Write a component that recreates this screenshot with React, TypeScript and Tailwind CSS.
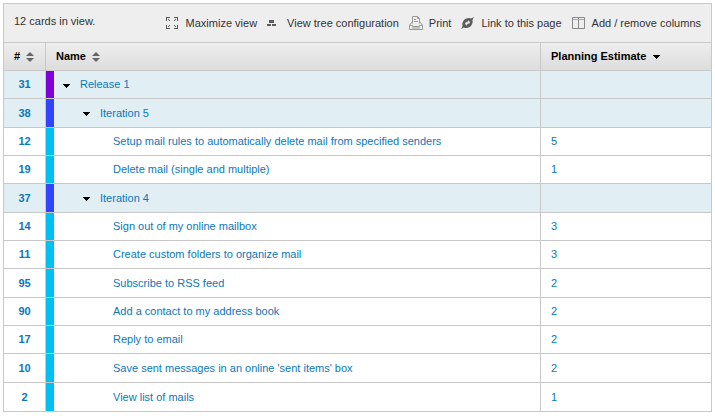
import type { ReactNode } from "react";

type Card = { id: number; name: string; level: 0 | 1 | 2; estimate?: number };

const cards: Card[] = [
  { id: 31, name: "Release 1", level: 0 },
  { id: 38, name: "Iteration 5", level: 1 },
  { id: 12, name: "Setup mail rules to automatically delete mail from specified senders", level: 2, estimate: 5 },
  { id: 19, name: "Delete mail (single and multiple)", level: 2, estimate: 1 },
  { id: 37, name: "Iteration 4", level: 1 },
  { id: 14, name: "Sign out of my online mailbox", level: 2, estimate: 3 },
  { id: 11, name: "Create custom folders to organize mail", level: 2, estimate: 3 },
  { id: 95, name: "Subscribe to RSS feed", level: 2, estimate: 2 },
  { id: 90, name: "Add a contact to my address book", level: 2, estimate: 2 },
  { id: 17, name: "Reply to email", level: 2, estimate: 2 },
  { id: 10, name: "Save sent messages in an online 'sent items' box", level: 2, estimate: 2 },
  { id: 2, name: "View list of mails", level: 2, estimate: 1 },
];

const barColor = ["bg-[#8000d8]", "bg-[#3344ff]", "bg-[#00c0f0]"];
const indent = ["pl-[9px]", "pl-[29px]", "pl-[59px]"];

function MaximizeIcon() {
  return (
    <svg width="12" height="12" viewBox="0 0 12 12" fill="#555" shapeRendering="crispEdges" aria-hidden="true">
      <path d="M0 0h4v1H1v3H0zM2 2h1v1H2zM3 3h1v1H3zM8 0h4v4h-1V1H8zM9 2h1v1H9zM8 3h1v1H8zM0 8h1v3h3v1H0zM2 9h1v1H2zM3 8h1v1H3zM11 8h1v4H8v-1h3zM9 9h1v1H9zM8 8h1v1H8z" />
    </svg>
  );
}

function TreeIcon() {
  return (
    <svg width="9" height="6" viewBox="0 0 9 6" fill="#5c5c5c" aria-hidden="true">
      <path d="M2 0h5v3H2zM0 4h4v2H0zM5 4h4v2H5z" />
    </svg>
  );
}

function PrintIcon() {
  return (
    <svg width="14" height="14" viewBox="0 0 14 14" fill="none" stroke="#999" aria-hidden="true">
      <path d="M3.5 7.5v-7h5l2 2v5M8.5.5v2h2M5 3.5h2M5 5.5h4M3.5 6.5h-1l-2 3v4h13v-4l-2-3h-1M.5 9.5h3v1h7v-1h3M3 12h8" />
    </svg>
  );
}

function LinkIcon() {
  return (
    <svg width="13" height="12" viewBox="0 0 13 12" aria-hidden="true">
      <path
        d="M12.8 0 11.4 3.2C12.2 5.600 10.800 8.800 8.200 10.200 6.200 11.200 4.200 11.200 2.900 10.400L.2 12 1.600 8.800C.8 6.400 2.200 3.200 4.800 1.800 6.800.8 8.800.8 10.100 1.600z"
        fill="#5c5c5c"
      />
      <path d="m3.800 7.500 1.200-2.700 1.100.8L7.500 3l.5 1.700 1.400-.5-1.300 2.900-1.100-.8L5.600 9l-.5-1.800z" fill="#eee" />
    </svg>
  );
}

function ColumnsIcon() {
  return (
    <svg width="13" height="12" viewBox="0 0 13 12" fill="none" stroke="#888" aria-hidden="true">
      <path d="M.5.5h12v11H.5zM6.5.5v11" />
      <path d="M1 2.5h11" stroke="#aaa" />
    </svg>
  );
}

function SortIcon() {
  return (
    <svg width="8" height="10" viewBox="0 0 8 10" fill="#666" aria-hidden="true">
      <path d="M4 0 8 4H0zM0 6h8L4 10z" />
    </svg>
  );
}

function DownIcon() {
  return (
    <svg width="7" height="4" viewBox="0 0 7 4" fill="#000" shapeRendering="crispEdges" aria-hidden="true">
      <path d="M0 0h7v1H6v1H5v1H4v1H3V3H2V2H1V1H0z" />
    </svg>
  );
}

const actions: { label: string; icon: ReactNode }[] = [
  { label: "Maximize view", icon: <MaximizeIcon /> },
  { label: "View tree configuration", icon: <TreeIcon /> },
  { label: "Print", icon: <PrintIcon /> },
  { label: "Link to this page", icon: <LinkIcon /> },
  { label: "Add / remove columns", icon: <ColumnsIcon /> },
];

export default function App() {
  return (
    <main className="m-[3px] border-x border-t border-[#c8c8c8] font-['Liberation_Sans',Arial,sans-serif] text-[11px] leading-4">
      <header className="flex h-[39px] items-center justify-between border-b border-[#c8c8c8] bg-[#eee] px-[10px] text-[#333]">
        <p className="pb-1">12 cards in view.</p>
        <nav className="flex gap-[10px]">
          {actions.map((a) => (
            <button key={a.label} type="button" className="flex items-center whitespace-nowrap">
              <span className="w-5">{a.icon}</span>
              {a.label}
            </button>
          ))}
        </nav>
      </header>
      <table className="w-full table-fixed border-separate border-spacing-0 text-left">
        <colgroup>
          <col className="w-[42px]" />
          <col className="w-2" />
          <col />
          <col className="w-[170px]" />
        </colgroup>
        <thead>
          <tr className="h-7 bg-linear-to-b from-[#eee] to-[#dcdcdc] text-black [&>th]:border-b [&>th]:border-[#c8c8c8] [&>th]:p-0 [&>th]:pb-[2px]">
            <th className="border-r">
              <button type="button" className="flex items-center gap-[6px] pl-[10px] font-bold">
                # <span className="pt-[3px]"><SortIcon /></span>
              </button>
            </th>
            <th colSpan={2} className="border-r">
              <button type="button" className="flex items-center gap-[6px] pl-[10px] font-bold">
                Name <span className="pt-[3px]"><SortIcon /></span>
              </button>
            </th>
            <th>
              <button type="button" className="flex items-center gap-[7px] pl-[10px] font-bold">
                Planning Estimate <span className="pt-[3px]"><DownIcon /></span>
              </button>
            </th>
          </tr>
        </thead>
        <tbody className="text-[#0b78b8]">
          {cards.map((c) => (
            <tr
              key={c.id}
              className={`h-7 nth-[3n+2]:h-[29px] last:h-[29px] [&>td]:border-b [&>td]:border-[#c8c8c8] [&>td]:p-0 [&>td]:pb-px ${c.level < 2 ? "bg-[#e1eff4]" : "bg-white"}`}
            >
              <td className="border-r text-center">
                <a href="#card" className="font-bold">{c.id}</a>
              </td>
              <td className={barColor[c.level]} />
              <td className="border-r">
                <div className={`flex items-center ${indent[c.level]}`}>
                  {c.level < 2 && (
                    <button type="button" aria-label={`Collapse ${c.name}`} className="w-[17px] pt-[3px]">
                      <DownIcon />
                    </button>
                  )}
                  <a href="#card">{c.name}</a>
                </div>
              </td>
              <td>
                <span className="pl-[10px]">{c.estimate}</span>
              </td>
            </tr>
          ))}
        </tbody>
      </table>
    </main>
  );
}
